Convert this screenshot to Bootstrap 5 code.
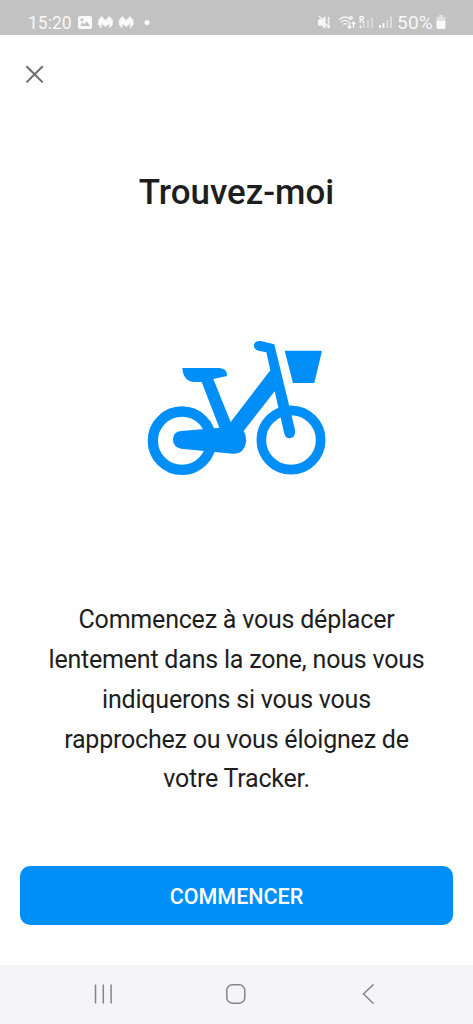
<!DOCTYPE html>
<html lang="fr">
<head>
<meta charset="utf-8">
<meta name="viewport" content="width=device-width, initial-scale=1">
<title>Trouvez-moi</title>
<link href="https://cdn.jsdelivr.net/npm/bootstrap@5.3.0/dist/css/bootstrap.min.css" rel="stylesheet">
<style>
body{font-family:Roboto,sans-serif;color:#1e1e1f;background:#fefefe}
svg{display:block;flex:none}
.status{height:35px;padding:10px 27px 0 28px;background:#c2c2c2;color:#f7f7f7;font-size:17.5px;line-height:26px}
.clock{width:50px}
.pct{font-size:19px;letter-spacing:.2px;width:39px}
.closebtn{padding:0;margin:30px 0 0 25px;width:20px;height:20px;border:0;background:none}
.title{font-size:34.9px;font-weight:500;line-height:42px;margin:87px 0 0}
.bike{margin-top:116px}
.intro{font-size:25px;letter-spacing:-.21px;line-height:39.85px;margin:115px 0 0}
.start{height:59px;margin:67px 20px 0;padding:8px 0 6px;background:#008ff9;border-radius:10px;font-size:21.5px;font-weight:500;line-height:1}
.start:hover{background:#007fe0}
.sysnav{height:59px;background:#f5f5f8;padding:0 94px 1px 92px}
</style>
</head>
<body>
<div class="d-flex flex-column vh-100 overflow-hidden">
  <header class="status d-flex justify-content-between flex-shrink-0">
    <div class="d-flex">
      <span class="clock">15:20</span>
      <svg width="75" height="25" viewBox="0 0 75 25" fill="#f9f9f9">
        <path fill-rule="evenodd" d="M2 6h10q2 0 2 2v9q0 2-2 2H2q-2 0-2-2V8q0-2 2-2zM2 16h10l-3-4.500-2.500 2.500-2-1.500zM4 8.300a1.500 1.500 0 1 0 .01 0z"/>
        <path id="m" d="M23.700 6.500L27.500 10.500 31.300 6.500 34.500 10V14.500L31.700 18V13.500L27.500 16.500 23.300 13.500V18L20.500 14.500V10z" stroke="#f9f9f9" stroke-width=".6" stroke-linejoin="round"/>
        <use href="#m" x="20.700"/>
        <circle cx="69" cy="12.500" r="2.500"/>
      </svg>
    </div>
    <div class="d-flex">
      <svg width="80" height="25" viewBox="0 0 80 25" fill="none" stroke="#f7f7f7" stroke-width="1.300">
        <path fill="#f7f7f7" stroke="none" d="M1 9.500h3.500L8.500 6v13l-4-3.500H1z"/>
        <path d="M2 6l10 12M11 7q2 1 0 3.500 2 1.500 0 3.500 2 1.500 1 4"/>
        <path d="M22 9.500q6.500-5 12 0M24 12q4-3.300 8 0M26.300 14.500q2-1.600 4 0"/>
        <path d="M32.500 12v6M30.700 16.300l1.800 2 1.800-2M36.500 18v-6M34.700 14l1.800-2 1.800 2"/>
        <circle cx="34" cy="8" r="1.300"/>
        <path stroke-width="2" opacity=".38" d="M47 18v-5M51 18v-8M55 18V7"/>
        <path stroke-width="1.600" d="M43.500 15.500V18"/>
        <path stroke-width="2" d="M63 18v-3M66.500 18v-5"/>
        <path stroke-width="2" opacity=".5" d="M70.500 18v-8M74 18V6.500"/>
        <text x="42" y="12.500" fill="#f7f7f7" stroke="none" font-size="8.500" font-weight="700">R</text>
      </svg>
      <span class="pct">50%</span>
      <svg width="10" height="25" viewBox="0 0 9 25" fill="#fafafa"><path opacity=".55" d="M2.500 5h4v2H9v5H0V7h2.500z"/><path d="M0 11h9v6.500q0 1.500-1.500 1.500h-6Q0 19 0 17.500z"/></svg>
    </div>
  </header>
  <main class="flex-grow-1 d-flex flex-column">
    <button class="closebtn" type="button" aria-label="Fermer">
      <svg width="20" height="20" viewBox="0 0 20 20" fill="none" stroke="#6c6c6c" stroke-width="2" stroke-linecap="round"><path d="M2 1.700L17.200 16.900M17.200 1.700L2 16.900"/></svg>
    </button>
    <h1 class="title text-center">Trouvez-moi</h1>
    <svg class="bike align-self-center" width="200" height="155" viewBox="-9 0 600 465" fill="#008ff9">
      <g fill="none" stroke="#008ff9">
        <circle cx="126" cy="332" r="87.500" stroke-width="31"/>
        <circle cx="453" cy="330" r="89" stroke-width="29"/>
      </g>
      <path d="M127 114H238Q263 116 261 138L220 147 272 276 391 121 379 67 355 62Q340 57 342 44 346 31 362 33L403 43 465 299Q468 321 450 325 437 325 433 311L404 184 311 303Q320 317 318 337 312 374 278 371L123 356Q99 350 99 329 99 305 123 303L238 293 185 156H163Q130 155 127 114z"/>
      <path d="M437 62H543Q546 63 545 67L523 159H459L435 67Q434 63 437 62z"/>
    </svg>
    <p class="intro text-center">Commencez à vous déplacer<br>lentement dans la zone, nous vous<br>indiquerons si vous vous<br>rapprochez ou vous éloignez de<br>votre Tracker.</p>
    <button class="start btn btn-primary border-0" type="button">COMMENCER</button>
  </main>
  <nav class="sysnav d-flex align-items-center justify-content-between flex-shrink-0">
    <svg width="20" height="20" viewBox="0 0 20 20" stroke="#858588" stroke-width="1.500"><path d="M3.500 .5v19M11.300 .5v19M19.100 .5v19"/></svg>
    <svg width="20" height="20" viewBox="0 0 20 20" fill="none" stroke="#858588" stroke-width="1.500"><rect x=".8" y=".8" width="18" height="18.400" rx="5.500"/></svg>
    <svg width="20" height="20" viewBox="0 0 20 20" fill="none" stroke="#858588" stroke-width="1.500"><path d="M14.500 .5L4.500 10l10 9.500"/></svg>
  </nav>
</div>
<script src="https://cdn.jsdelivr.net/npm/bootstrap@5.3.0/dist/js/bootstrap.bundle.min.js"></script>
</body>
</html>
